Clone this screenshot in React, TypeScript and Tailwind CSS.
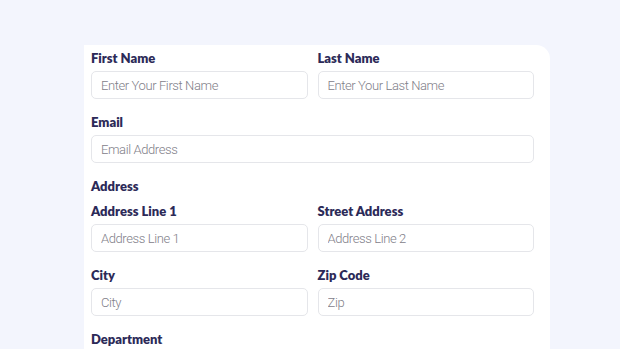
import React from "react";

function Field({ label, placeholder }: { label: string; placeholder: string }) {
  return (
    <div className="flex flex-col">
      <label className="h-[16px] mb-[5px] text-[13px] leading-[16px] font-extrabold text-[#2c2a58]" style={{ fontFamily: "Lato, sans-serif" }}>
        {label}
      </label>
      <input
        placeholder={placeholder}
        className="h-[28px] w-full rounded-[5px] border border-[#e5e6ea] bg-white px-[9px] text-[13px] font-light tracking-[-0.4px] text-[#333] placeholder:text-[#7f8089] outline-none"
        style={{ fontFamily: "Roboto, sans-serif" }}
      />
    </div>
  );
}

export default function App() {
  return (
    <div className="h-[349px] w-[620px] overflow-hidden bg-[#f3f5fd] pt-[45px] pl-[84px]">
      <div className="w-[466px] h-[400px] bg-white rounded-tr-[14px] pt-[5px] pl-[7px] pr-[16px] flex flex-col">
        <div className="grid grid-cols-2 gap-x-[10px]">
          <Field label="First Name" placeholder="Enter Your First Name" />
          <Field label="Last Name" placeholder="Enter Your Last Name" />
        </div>
        <div className="mt-[15px]">
          <Field label="Email" placeholder="Email Address" />
        </div>
        <div className="mt-[15px] h-[16px] mb-[9px] text-[13px] leading-[16px] font-extrabold text-[#2c2a58]" style={{ fontFamily: "Lato, sans-serif" }}>
          Address
        </div>
        <div className="grid grid-cols-2 gap-x-[10px]">
          <Field label="Address Line 1" placeholder="Address Line 1" />
          <Field label="Street Address" placeholder="Address Line 2" />
        </div>
        <div className="mt-[15px] grid grid-cols-2 gap-x-[10px]">
          <Field label="City" placeholder="City" />
          <Field label="Zip Code" placeholder="Zip" />
        </div>
        <div className="mt-[15px] h-[16px] text-[13px] leading-[16px] font-extrabold text-[#2c2a58]" style={{ fontFamily: "Lato, sans-serif" }}>
          Department
        </div>
      </div>
    </div>
  );
}
